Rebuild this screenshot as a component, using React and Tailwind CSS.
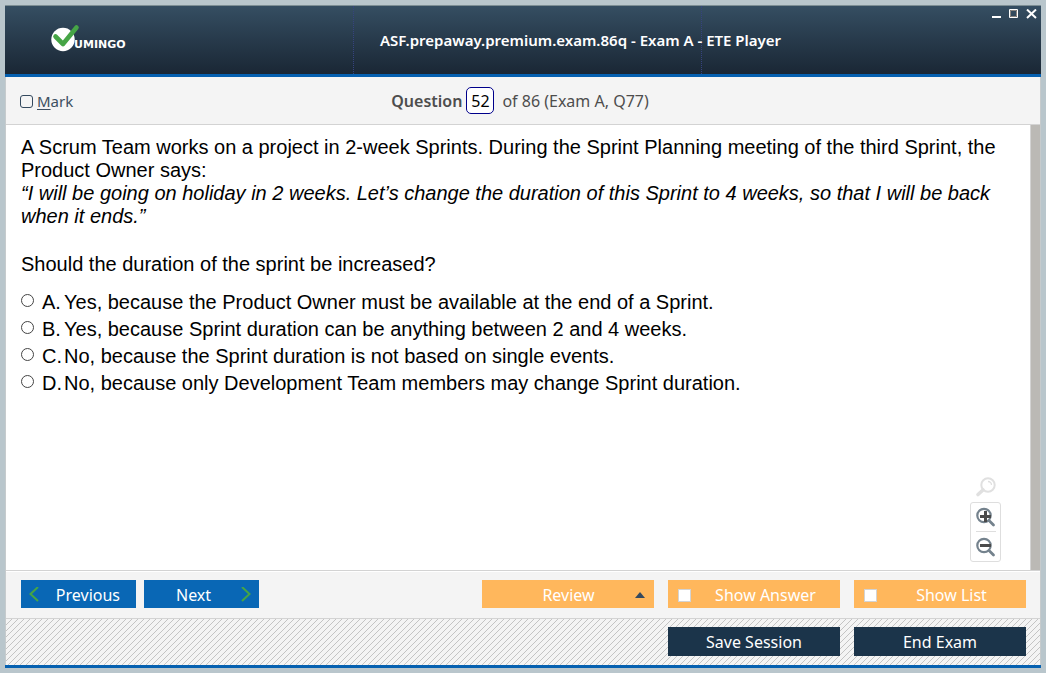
import React from "react";

const answers = [
  ["A.", "Yes, because the Product Owner must be available at the end of a Sprint."],
  ["B.", "Yes, because Sprint duration can be anything between 2 and 4 weeks."],
  ["C.", "No, because the Sprint duration is not based on single events."],
  ["D.", "No, because only Development Team members may change Sprint duration."],
];

function Logo() {
  return (
    <svg width="84" height="30" viewBox="0 0 84 30" role="img" aria-label="Vumingo">
      <circle cx="12" cy="15.500" r="11.700" fill="#fff" />
      <path d="M4.500 12.500L12 20L25.500 3.500" fill="none" stroke="#46a546" strokeWidth="4.600" strokeLinecap="round" strokeLinejoin="round" />
      <text x="23" y="24" fill="#fff" className="font-['DejaVu_Sans',sans-serif] text-[11px] font-bold">UMINGO</text>
    </svg>
  );
}

function Header() {
  return (
    <header className="grid h-[72px] grid-cols-[1fr_348px_339px] border-t border-b-[3px] border-t-[#7d8e94] border-b-[#0560b0] bg-linear-to-b from-[#354e62] to-[#1a2735] text-white">
      <div className="border-r border-dotted border-[#36437f] pt-[18px] pl-[46px]">
        <Logo />
      </div>
      <h1 className="flex items-center border-r border-dotted border-[#36437f] pl-[26px] text-[15px] font-semibold whitespace-nowrap">
        ASF.prepaway.premium.exam.86q - Exam A - ETE Player
      </h1>
      <div className="flex items-start justify-end gap-2 pt-[3px] pr-1">
        <button aria-label="Minimize">
          <svg width="9" height="10"><path d="M0 7h9v2H0z" fill="#fff" /></svg>
        </button>
        <button aria-label="Maximize">
          <svg width="9" height="10" fill="none">
            <path d="M.5 .5h8v8h-8z" stroke="#fff" />
            <path d="M1.500 1.500h6v6h-6z" stroke="#8a8580" />
          </svg>
        </button>
        <button aria-label="Close">
          <svg width="11" height="10"><path d="M1 .5l9 8.500M10 .5l-9 8.500" stroke="#fff" strokeWidth="2" /></svg>
        </button>
      </div>
    </header>
  );
}

function QuestionBar() {
  return (
    <div className="grid h-12 grid-cols-[1fr_auto_1fr] items-center border-b border-[#d3d3d3] bg-[#f4f4f4] pr-5 pl-[14px] text-[15px] text-[#4d4d4d]">
      <label className="flex items-center gap-1 pt-0.5 text-[#3c4f60]">
        <input type="checkbox" className="size-[13px] appearance-none rounded-[3px] border border-[#34495e] checked:bg-[#34495e]" />
        <span><u className="underline-offset-2">M</u>ark</span>
      </label>
      <div className="flex items-center text-base">
        <label htmlFor="number" className="font-semibold">Question</label>
        <input id="number" defaultValue="52" className="mx-1 h-[27px] w-7 rounded-[5px] border border-[#00008b] bg-white text-center text-black" />
        <span className="pl-1">of 86 (Exam A, Q77)</span>
      </div>
    </div>
  );
}

function ZoomTools() {
  return (
    <div className="absolute right-[29px] bottom-2 flex flex-col items-center">
      <button aria-label="Reset zoom">
        <svg width="22" height="22" viewBox="0 0 22 22" fill="none" stroke="#e0e0e0">
          <circle cx="13" cy="9" r="6.700" strokeWidth="2" />
          <path d="M13 5.500a3.500 3.500 0 0 1 3.500 3.500" strokeWidth="1.300" />
          <path d="M8 14L3 18.500" strokeWidth="3.600" strokeLinecap="round" />
        </svg>
      </button>
      <div className="mt-1 flex w-[31px] flex-col items-center rounded-[3px] border border-[#dedede] bg-white">
        <button aria-label="Zoom in" className="flex h-[29px] w-5 items-center justify-center border-b border-[#dedede]">
          <svg width="20" height="20" viewBox="0 0 20 20" fill="none">
            <circle cx="8" cy="8.500" r="6.700" stroke="#74828d" strokeWidth="2.200" />
            <path d="M13 13.500l4.500 4.500" stroke="#74828d" strokeWidth="2.800" strokeLinecap="round" />
            <path d="M4 9.500h11M9.500 4v11" stroke="#4a4a4a" strokeWidth="3" />
          </svg>
        </button>
        <button aria-label="Zoom out" className="flex h-[29px] w-5 items-center justify-center">
          <svg width="20" height="20" viewBox="0 0 20 20" fill="none">
            <circle cx="8" cy="8.500" r="6.700" stroke="#74828d" strokeWidth="2.200" />
            <path d="M13 13.500l4.500 4.500" stroke="#74828d" strokeWidth="2.800" strokeLinecap="round" />
            <path d="M4 8.500h11" stroke="#4a4a4a" strokeWidth="3" />
          </svg>
        </button>
      </div>
    </div>
  );
}

function Question() {
  return (
    <main className="flex grow bg-white">
      <div className="relative grow pt-[11px] pr-4 pb-4 pl-[15px] font-['Liberation_Sans',Arial,sans-serif] text-[20px] text-black">
        <p className="leading-[23px]">
          A Scrum Team works on a project in 2-week Sprints. During the Sprint Planning meeting of the third Sprint, the Product Owner says:
          <br />
          <i>“I will be going on holiday in 2 weeks. Let’s change the duration of this Sprint to 4 weeks, so that I will be back when it ends.”</i>
        </p>
        <p className="mt-[25px] leading-[23px]">Should the duration of the sprint be increased?</p>
        <fieldset className="mt-3">
          {answers.map(([letter, text]) => (
            <label key={letter} className="flex h-[27px] items-center">
              <input type="radio" name="answer" className="mr-2 mb-[3px] size-[13px] appearance-none rounded-full border border-[#444] checked:bg-[#444]" />
              <span className="w-[22px]">{letter}</span>
              <span>{text}</span>
            </label>
          ))}
        </fieldset>
        <ZoomTools />
      </div>
      <div className="w-[11px] border-l border-[#d3d3d3] bg-[#bbb9b5]" />
    </main>
  );
}

function Toggle({ children }) {
  return (
    <label className="flex h-7 w-[172px] items-center bg-[#ffb75c] pt-0.5 pl-[10px]">
      <input type="checkbox" className="size-[13px] appearance-none border border-[#d3d3d3] bg-white checked:bg-[#34495e]" />
      <span className="grow text-center">{children}</span>
    </label>
  );
}

function Footer() {
  return (
    <footer className="text-base text-white">
      <div className="flex h-12 justify-between border-t border-[#d3d3d3] bg-[#f4f4f4] pr-[14px] pl-[15px] pt-[9px] shadow-[inset_0_1px_#fff]">
        <div className="flex gap-2">
          <button className="flex h-7 w-[115px] items-center justify-between bg-[#0967b5] pt-0.5 pr-4 pl-2">
            <svg width="10" height="16" fill="none" stroke="#46a546" strokeWidth="2"><path d="M9 0L1.500 7L9 14" /></svg>
            Previous
          </button>
          <button className="flex h-7 w-[115px] items-center justify-between bg-[#0967b5] pt-0.5 pr-2 pl-8">
            Next
            <svg width="10" height="16" fill="none" stroke="#46a546" strokeWidth="2"><path d="M1 0l7.500 7L1 14" /></svg>
          </button>
        </div>
        <div className="flex gap-[14px]">
          <button className="flex h-7 w-[172px] items-center bg-[#ffb75c] pt-0.5 pr-[9px]">
            <span className="grow pl-5 text-center">Review</span>
            <svg width="10" height="6"><path d="M5 0l5 6H0z" fill="#34495e" /></svg>
          </button>
          <Toggle>Show Answer</Toggle>
          <Toggle>Show List</Toggle>
        </div>
      </div>
      <div className="flex h-[47px] justify-end gap-[14px] border-t border-[#d3d3d3] bg-[#f4f4f4] bg-[linear-gradient(135deg,transparent_45%,#c4c4c4_45%_55%,transparent_55%)] bg-size-[6px_6px] pt-2 pr-[14px] pl-[15px]">
        <button className="h-[29px] w-[172px] bg-[#1b344a]">Save Session</button>
        <button className="h-[29px] w-[172px] bg-[#1b344a]">End Exam</button>
      </div>
    </footer>
  );
}

export default function App() {
  return (
    <div className="flex min-h-screen flex-col bg-[#b9c6cc] p-[5px] font-['Noto_Sans',sans-serif]">
      <div className="flex grow flex-col border-b-[3px] border-[#0560b0]">
        <Header />
        <div className="flex grow flex-col border-x border-[#c6cbcd]">
          <QuestionBar />
          <Question />
          <Footer />
        </div>
      </div>
    </div>
  );
}
